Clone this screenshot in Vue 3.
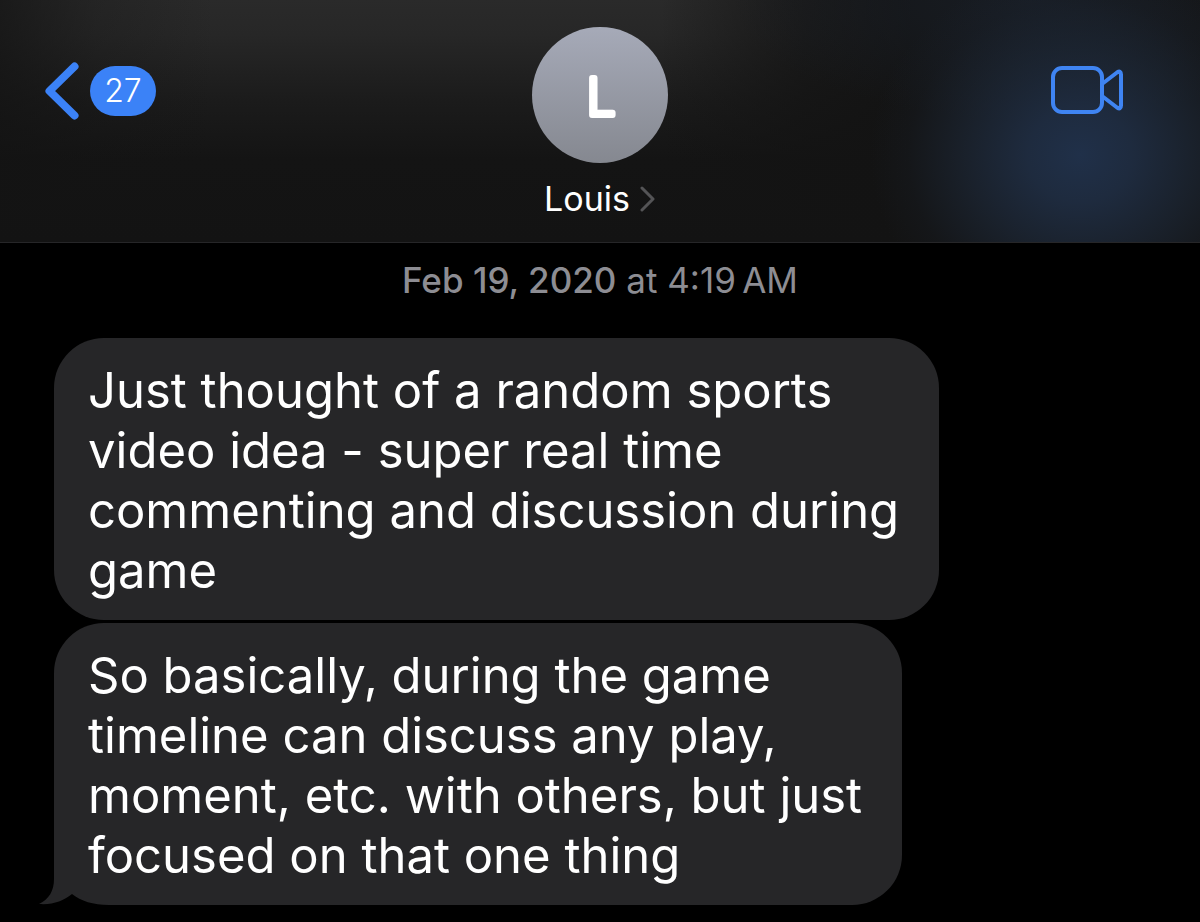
<script setup>
const contact = { name: 'Louis', initial: 'L', unread: 27 }
const sent = { date: 'Feb 19, 2020', time: '4:19\u2009AM' }

const messages = [
  {
    id: 1,
    lines: [
      'Just thought of a random sports',
      'video idea - super real time',
      'commenting and discussion during',
      'game',
    ],
  },
  {
    id: 2,
    lines: [
      'So basically, during the game',
      'timeline can discuss any play,',
      'moment, etc. with others, but just',
      'focused on that one thing',
    ],
    tail: true,
  },
]
</script>

<template>
  <div class="app">
    <header class="bar">
      <button class="back" type="button" aria-label="Back to conversations">
        <svg class="back-icon" viewBox="0 0 34 58" aria-hidden="true">
          <path d="M29.5 4.5 L4.5 29 L29.5 53.5" />
        </svg>
        <span class="count">{{ contact.unread }}</span>
      </button>

      <button class="contact" type="button">
        <svg class="avatar" viewBox="0 0 136 136" aria-hidden="true">
          <defs>
            <linearGradient id="avatar-fill" x1="0" y1="0" x2="0" y2="1">
              <stop offset="0" stop-color="#a6aab8" />
              <stop offset="1" stop-color="#858890" />
            </linearGradient>
          </defs>
          <circle cx="68" cy="68" r="68" fill="url(#avatar-fill)" />
          <text x="69" y="88" text-anchor="middle">{{ contact.initial }}</text>
        </svg>
        <span class="name">
          {{ contact.name }}
          <svg class="chevron" viewBox="0 0 16 26" aria-hidden="true">
            <path d="M2 2 L13 13 L2 24" />
          </svg>
        </span>
      </button>

      <button class="video" type="button" aria-label="Video call">
        <svg viewBox="0 0 74 50" aria-hidden="true">
          <rect x="3" y="3" width="49" height="44" rx="9" />
          <path d="M52 19 L67 7.500 Q71 5 71 9.500 V40.500 Q71 45 67 42.500 L52 31" />
        </svg>
      </button>
    </header>

    <main class="thread">
      <p class="stamp"><strong>{{ sent.date }}</strong> at {{ sent.time }}</p>
      <div class="messages">
        <div v-for="m in messages" :key="m.id" class="bubble" :class="{ tailed: m.tail }">
          <svg v-if="m.tail" class="tail" viewBox="0 0 70 60" aria-hidden="true">
            <path d="M15 0 V34 C15 46 10 54 0 59 C14 60 24 56 33 49 C42 56 54 60 70 60 V0 Z" />
          </svg>
          <span v-for="line in m.lines" :key="line" class="line">{{ line }}</span>
        </div>
      </div>
    </main>
  </div>
</template>

<style>
body {
  margin: 0;
  background: #000;
}
</style>

<style scoped>
.app {
  min-height: 100vh;
  background: #000;
  color: #fff;
  font-family: Inter, "Liberation Sans", sans-serif;
}

button {
  padding: 0;
  border: 0;
  background: none;
  color: inherit;
  font: inherit;
  cursor: pointer;
}

svg {
  display: block;
  fill: none;
  stroke-linecap: round;
  stroke-linejoin: round;
}

.bar {
  display: grid;
  grid-template-columns: 1fr auto 1fr;
  align-items: start;
  padding: 27px 76px 22px 45px;
  border-bottom: 1px solid #262628;
  background:
    radial-gradient(ellipse 210px 190px at 90% 64%, #203049 0%, rgba(32, 47, 70, 0.85) 25%, rgba(32, 46, 66, 0.5) 55%, rgba(30, 42, 60, 0.15) 82%, rgba(28, 40, 56, 0) 100%),
    radial-gradient(ellipse 300px 120px at 86% 0, rgba(25, 31, 40, 0.8), rgba(22, 28, 36, 0)),
    linear-gradient(90deg, rgba(19, 19, 19, 0.7) 0%, rgba(19, 19, 19, 0.25) 8%, rgba(19, 19, 19, 0) 18%, rgba(19, 19, 19, 0) 55%, rgba(19, 19, 19, 0.7) 67%, #131313 76%),
    linear-gradient(#2a2a2a 0%, #272727 14%, #1b1b1b 42%, #141414 66%, #131313 100%);
}

.back {
  display: flex;
  align-items: center;
  gap: 11px;
  justify-self: start;
  margin-top: 35px;
}

.back-icon {
  width: 34px;
  height: 58px;
  stroke: #3b82f7;
  stroke-width: 8;
}

.count {
  box-sizing: border-box;
  min-width: 66px;
  padding: 0 14px;
  border-radius: 25px;
  background: #3b82f7;
  font-size: 32px;
  font-weight: 300;
  line-height: 50px;
}

.contact {
  display: flex;
  flex-direction: column;
  align-items: center;
  gap: 14px;
  margin-left: 31px;
}

.avatar {
  width: 136px;
  height: 136px;
}

.avatar text {
  fill: #fff;
  stroke: #fff;
  stroke-width: 6;
  font-size: 51px;
  font-weight: 200;
}

.name {
  display: flex;
  align-items: center;
  gap: 10px;
  font-size: 34px;
  line-height: 43px;
}

.chevron {
  width: 16px;
  height: 26px;
  stroke: #545456;
  stroke-width: 3;
}

.video {
  justify-self: end;
  margin-top: 38px;
}

.video svg {
  width: 74px;
  height: 50px;
  stroke: #3f84f2;
  stroke-width: 4;
}

.thread {
  padding: 15px 54px 16px;
}

.stamp {
  margin: 0;
  color: #8d8d93;
  font-size: 35px;
  line-height: 44px;
  text-align: center;
}

.stamp strong {
  font-weight: 500;
}

.messages {
  display: flex;
  flex-direction: column;
  align-items: flex-start;
  gap: 3px;
  margin-top: 36px;
}

.bubble {
  position: relative;
  padding: 23px 40px 19px 34px;
  border-radius: 50px;
  background: #262628;
  font-size: 49px;
  line-height: 60px;
}

.line {
  display: block;
  position: relative;
}

.tail {
  position: absolute;
  bottom: 0;
  left: -15px;
  width: 70px;
  height: 60px;
  fill: #262628;
}

/* The lower left corner is left open for the tail to fill. */
.tailed {
  border-bottom-left-radius: 0;
  background:
    linear-gradient(#262628, #262628) 0 0 / 100% calc(100% - 59px) no-repeat,
    linear-gradient(#262628, #262628) 54px 100% / 100% 60px no-repeat;
}
</style>
